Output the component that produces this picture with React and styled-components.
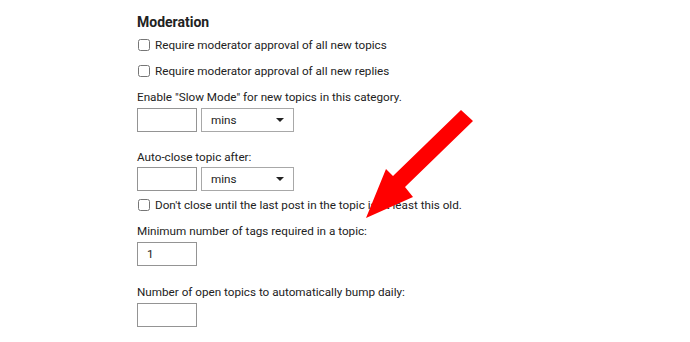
import React from "react"
import styled, { createGlobalStyle } from "styled-components"

const GlobalStyle = createGlobalStyle`
  html, body {
    margin: 0;
    padding: 0;
    background: #fff;
  }
  body {
    font-family: Roboto, "Liberation Sans", Arial, sans-serif;
    font-size: 11.7px;
    color: #222;
  }
`

const Page = styled.div`
  position: relative;
  width: 690px;
  height: 342px;
  overflow: hidden;
  padding: 12px 0 0 137px;
  box-sizing: border-box;
`

const Title = styled.h3`
  margin: 0 0 4px 0;
  font-size: 14px;
  font-weight: 700;
  line-height: 20px;
`

const CheckRow = styled.label`
  display: flex;
  align-items: center;
  height: 18px;
  margin-bottom: ${p => p.$mb || 8}px;
`

const Check = styled.input.attrs({ type: "checkbox" })`
  width: 12px;
  height: 12px;
  margin: 0 5px 0 1px;
`

const Field = styled.div`
  margin-bottom: ${p => p.$mb || 0}px;
`

const Label = styled.div`
  line-height: 18px;
  margin-bottom: ${p => p.$mb ?? 2}px;
`

const Controls = styled.div`
  display: flex;
  gap: 4px;
`

const TextInput = styled.input`
  box-sizing: border-box;
  width: 60px;
  height: 24px;
  margin: 0;
  padding: 0 9px;
  border: 1px solid #949494;
  font: inherit;
  color: #222;
  outline: none;
`

const SelectWrap = styled.div`
  position: relative;
  width: 93px;
  height: 24px;
  &::after {
    content: "";
    position: absolute;
    right: 10px;
    top: 10px;
    border-left: 4px solid transparent;
    border-right: 4px solid transparent;
    border-top: 4px solid #222;
    pointer-events: none;
  }
`

const Select = styled.select`
  appearance: none;
  box-sizing: border-box;
  width: 100%;
  height: 100%;
  margin: 0;
  padding: 0 9px;
  border: 1px solid #a8a8a8;
  border-radius: 0;
  background: #fff;
  font: inherit;
  color: #222;
  outline: none;
`

const Arrow = styled.svg`
  position: absolute;
  left: 0;
  top: 0;
  pointer-events: none;
`

const UnitSelect = () => (
  <SelectWrap>
    <Select defaultValue="mins">
      <option value="mins">mins</option>
      <option value="hours">hours</option>
      <option value="days">days</option>
    </Select>
  </SelectWrap>
)

export default function App() {
  return (
    <>
      <GlobalStyle />
      <Page>
        <Title>Moderation</Title>
        <CheckRow>
          <Check />
          Require moderator approval of all new topics
        </CheckRow>
        <CheckRow>
          <Check />
          Require moderator approval of all new replies
        </CheckRow>
        <Field $mb={16}>
          <Label>Enable "Slow Mode" for new topics in this category.</Label>
          <Controls>
            <TextInput />
            <UnitSelect />
          </Controls>
        </Field>
        <Field $mb={5}>
          <Label $mb={1}>Auto-close topic after:</Label>
          <Controls>
            <TextInput />
            <UnitSelect />
          </Controls>
        </Field>
        <CheckRow>
          <Check />
          Don't close until the last post in the topic is at least this old.
        </CheckRow>
        <Field $mb={17}>
          <Label>Minimum number of tags required in a topic:</Label>
          <TextInput defaultValue="1" />
        </Field>
        <Field>
          <Label>Number of open topics to automatically bump daily:</Label>
          <TextInput />
        </Field>
        <Arrow width="690" height="342" viewBox="0 0 690 342">
          <polygon
            points="461,110 473,121 405,187 413,197 366,218 386,169 393,176"
            fill="#ff0000"
          />
        </Arrow>
      </Page>
    </>
  )
}
